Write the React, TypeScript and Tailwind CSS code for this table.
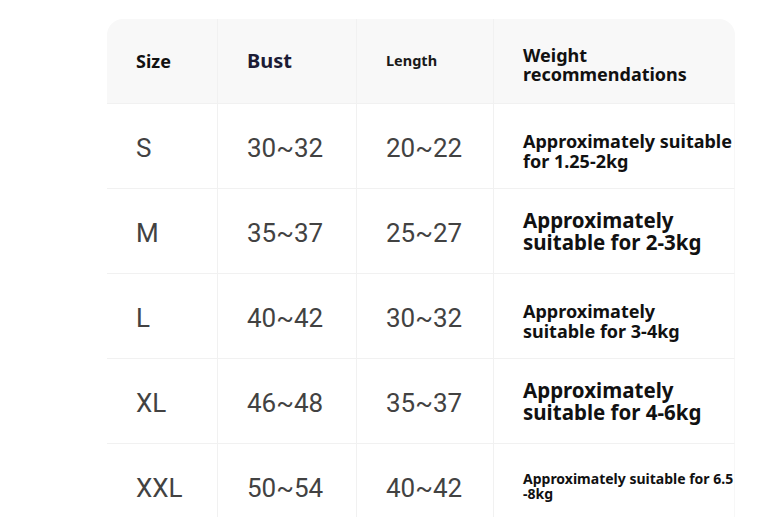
import React from 'react';

type Row = {
  size: string;
  bust: string;
  length: string;
  weight: string;
  weightClass: string;
};

const rows: Row[] = [
  { size: 'S', bust: '30~32', length: '20~22', weight: 'Approximately suitable for 1.25-2kg', weightClass: 'text-[18px] leading-[20px] max-w-[212px] mt-[10px]' },
  { size: 'M', bust: '35~37', length: '25~27', weight: 'Approximately suitable for 2-3kg', weightClass: 'text-[20.5px] leading-[22px] max-w-[190px]' },
  { size: 'L', bust: '40~42', length: '30~32', weight: 'Approximately suitable for 3-4kg', weightClass: 'text-[18px] leading-[20px] max-w-[175px] mt-[10px]' },
  { size: 'XL', bust: '46~48', length: '35~37', weight: 'Approximately suitable for 4-6kg', weightClass: 'text-[20.5px] leading-[22px] max-w-[190px]' },
  { size: 'XXL', bust: '50~54', length: '40~42', weight: 'Approximately suitable for 6.5 -8kg', weightClass: 'text-[14px] leading-[15px] max-w-[212px]' },
];

const dataFont = { fontFamily: 'Roboto, "Liberation Sans", sans-serif' };
const headFont = { fontFamily: '"Noto Sans", "Open Sans", sans-serif' };

const cell = 'flex items-center pl-[29px] border-r border-b border-[#f1f1f1] h-[85px]';

export default function App() {
  return (
    <div className="min-h-screen bg-white pl-[107px] pt-[19px] overflow-hidden">
      <div className="w-[628px] rounded-tl-[16px] rounded-tr-[16px] overflow-hidden">
        <div className="grid grid-cols-[111px_139px_137px_241px] bg-[#f8f8f8]" style={headFont}>
          <div className={cell}>
            <span className="text-[18px] font-bold text-[#111]">Size</span>
          </div>
          <div className={cell}>
            <span className="text-[20px] font-bold text-[#1c1c35]">Bust</span>
          </div>
          <div className={cell}>
            <span className="text-[14.5px] font-bold text-[#1a1a1a]">Length</span>
          </div>
          <div className={`${cell} border-r-0`}>
            <span className="text-[18px] leading-[19px] font-bold text-[#111] max-w-[200px] mt-[8px]">
              Weight recommendations
            </span>
          </div>
        </div>
        {rows.map((r) => (
          <div key={r.size} className="grid grid-cols-[111px_139px_137px_241px] bg-white">
            <div className={cell} style={dataFont}>
              <span className="text-[26px] text-[#424242] mt-[5px]">{r.size}</span>
            </div>
            <div className={cell} style={dataFont}>
              <span className="text-[26px] text-[#424242] mt-[5px]">{r.bust}</span>
            </div>
            <div className={cell} style={dataFont}>
              <span className="text-[26px] text-[#424242] mt-[5px]">{r.length}</span>
            </div>
            <div className={`${cell} border-r-[#f7f7f7]`} style={headFont}>
              <span className={`font-bold text-[#111] ${r.weightClass}`}>{r.weight}</span>
            </div>
          </div>
        ))}
      </div>
    </div>
  );
}
